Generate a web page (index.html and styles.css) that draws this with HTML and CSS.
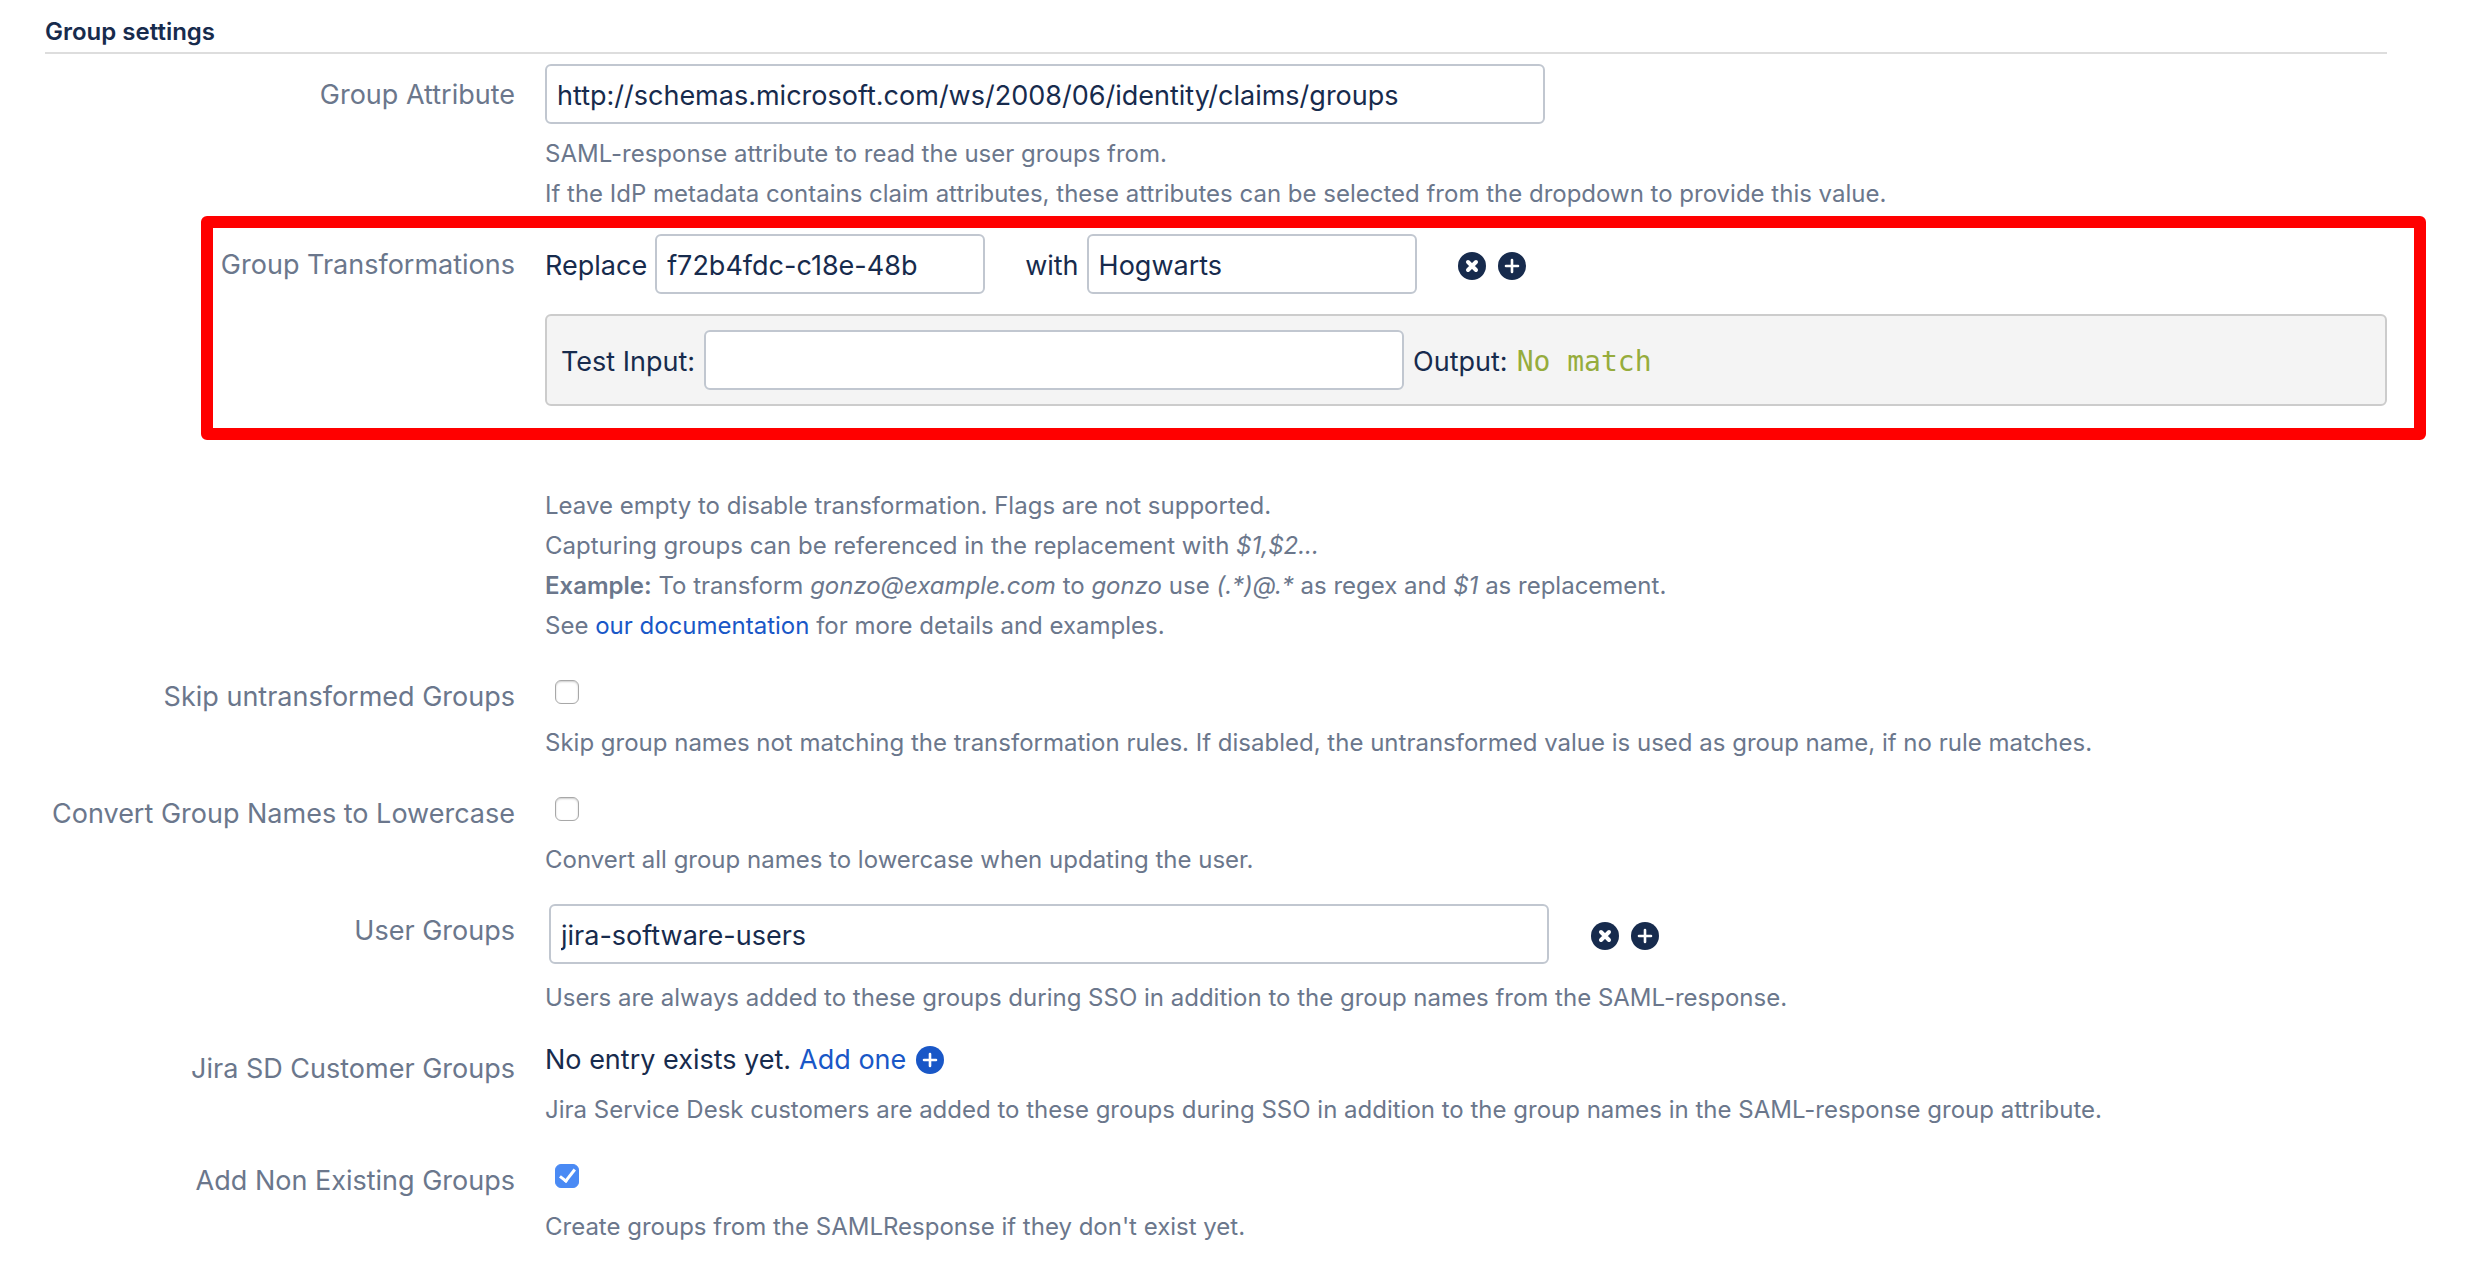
FILE: index.html
```html
<!DOCTYPE html>
<html lang="en">
<head>
  <meta charset="UTF-8" />
  <meta name="viewport" content="width=device-width, initial-scale=1" />
  <title>Group settings</title>
  <link rel="stylesheet" href="styles.css">
</head>
<body>
  <!-- shared icons -->
  <svg class="sprite" aria-hidden="true">
    <symbol id="icon-remove" viewBox="0 0 28 28">
      <circle cx="14" cy="14" r="14" fill="currentColor" />
      <path d="M10 10l8 8M18 10l-8 8" stroke="#fff" stroke-width="4" stroke-linecap="round" />
    </symbol>
    <symbol id="icon-add" viewBox="0 0 28 28">
      <circle cx="14" cy="14" r="14" fill="currentColor" />
      <path d="M14 8v12M8 14h12" stroke="#fff" stroke-width="2.6" stroke-linecap="round" />
    </symbol>
  </svg>

  <form class="settings">
    <h2>Group settings</h2>

    <div class="field">
      <label class="field-label" for="groupAttribute">Group Attribute</label>
      <div class="field-body">
        <input type="text" class="text long" id="groupAttribute" value="http://schemas.microsoft.com/ws/2008/06/identity/claims/groups" />
        <p class="description">
          SAML-response attribute to read the user groups from.<br>
          If the IdP metadata contains claim attributes, these attributes can be selected from the dropdown to provide this value.
        </p>
      </div>
    </div>

    <div class="field highlighted">
      <span class="field-label">Group Transformations</span>
      <div class="field-body">
        <div class="rule">
          <label for="replaceRegex">Replace</label>
          <input type="text" class="text short" id="replaceRegex" value="f72b4fdc-c18e-48b" />
          <label class="with" for="replaceWith">with</label>
          <input type="text" class="text short" id="replaceWith" value="Hogwarts" />
          <div class="actions">
            <button type="button" aria-label="Remove transformation"><svg class="icon"><use href="#icon-remove" /></svg></button>
            <button type="button" aria-label="Add transformation"><svg class="icon"><use href="#icon-add" /></svg></button>
          </div>
        </div>
        <div class="test-box">
          <label for="testInput">Test Input:</label>
          <input type="text" class="text medium" id="testInput" />
          <span>Output:</span>
          <output class="result" for="testInput">No match</output>
        </div>
        <p class="description spaced">
          Leave empty to disable transformation. Flags are not supported.<br>
          Capturing groups can be referenced in the replacement with <em>$1,$2...</em><br>
          <strong>Example:</strong> To transform <em>gonzo@example.com</em> to <em>gonzo</em> use <em>(.*)@.*</em> as regex and <em>$1</em> as replacement.<br>
          See <a href="#documentation">our documentation</a> for more details and examples.
        </p>
      </div>
    </div>

    <div class="field">
      <label class="field-label" for="skipGroups">Skip untransformed Groups</label>
      <div class="field-body">
        <div class="check"><input type="checkbox" id="skipGroups" /></div>
        <p class="description">Skip group names not matching the transformation rules. If disabled, the untransformed value is used as group name, if no rule matches.</p>
      </div>
    </div>

    <div class="field">
      <label class="field-label" for="lowercase">Convert Group Names to Lowercase</label>
      <div class="field-body">
        <div class="check"><input type="checkbox" id="lowercase" /></div>
        <p class="description">Convert all group names to lowercase when updating the user.</p>
      </div>
    </div>

    <div class="field">
      <label class="field-label" for="userGroups">User Groups</label>
      <div class="field-body">
        <div class="entry">
          <input type="text" class="text long" id="userGroups" value="jira-software-users" />
          <div class="actions">
            <button type="button" aria-label="Remove group"><svg class="icon"><use href="#icon-remove" /></svg></button>
            <button type="button" aria-label="Add group"><svg class="icon"><use href="#icon-add" /></svg></button>
          </div>
        </div>
        <p class="description">Users are always added to these groups during SSO in addition to the group names from the SAML-response.</p>
      </div>
    </div>

    <div class="field">
      <span class="field-label">Jira SD Customer Groups</span>
      <div class="field-body">
        <div class="empty">
          <span>No entry exists yet.</span>
          <a href="#add">Add one <svg class="icon" aria-hidden="true"><use href="#icon-add" /></svg></a>
        </div>
        <p class="description">Jira Service Desk customers are added to these groups during SSO in addition to the group names in the SAML-response group attribute.</p>
      </div>
    </div>

    <div class="field">
      <label class="field-label" for="addGroups">Add Non Existing Groups</label>
      <div class="field-body">
        <div class="check"><input type="checkbox" id="addGroups" checked /></div>
        <p class="description">Create groups from the SAMLResponse if they don't exist yet.</p>
      </div>
    </div>
  </form>
</body>
</html>
```
FILE: styles.css
```css
*,
*::before {
  box-sizing: border-box;
}
body {
  margin: 0;
  background: #fff;
  color: #172b4d;
  font-family: Inter, "Liberation Sans", sans-serif;
  font-size: 27px;
  line-height: 40px;
}
.sprite {
  display: none;
}
.settings {
  padding: 12px 98px 24px 45px;
}
h2 {
  margin: 0 0 10px;
  border-bottom: 2px solid #ddd;
  font-size: 24px;
  font-weight: 600;
  line-height: 40px;
}
.field {
  display: grid;
  grid-template-columns: 470px 1fr;
  column-gap: 30px;
  margin-bottom: 20px;
}
.field-label {
  padding-top: 11px;
  color: #6b778c;
  text-align: right;
}
.description {
  margin: 10px 0 0;
  color: #6b778c;
  font-size: 24px;
}
.description.spaced {
  margin-top: 80px;
}
.description strong {
  font-weight: 600;
}
a {
  color: #1957c7;
  text-decoration: none;
}
a:hover {
  text-decoration: underline;
}

/* text fields */
.text {
  display: block;
  height: 60px;
  padding: 3px 10px 0;
  border: 2px solid #c1c7d0;
  border-radius: 6px;
  background: #fff;
  color: #172b4d;
  font: inherit;
}
.text:focus {
  outline: none;
  border-color: #4c9aff;
}
.long {
  width: 1000px;
}
.medium {
  width: 700px;
}
.short {
  width: 330px;
}

/* transformation rule */
.highlighted {
  position: relative;
}
.highlighted::before {
  content: "";
  position: absolute;
  top: -18px;
  left: 156px;
  right: -39px;
  height: 224px;
  border: 12px solid #f00;
  border-radius: 6px;
  pointer-events: none;
}
.rule,
.entry,
.empty,
.test-box {
  display: flex;
  align-items: center;
}
.rule {
  gap: 8px;
}
.rule label,
.test-box label,
.test-box span,
.test-box output,
.actions {
  padding-top: 4px;
}
.with {
  margin-left: 32px;
}
.actions {
  display: flex;
  gap: 12px;
  margin-left: 33px;
}
.entry {
  padding: 4px;
}
.entry .actions {
  margin-left: 42px;
}
button {
  padding: 0;
  border: none;
  background: none;
  color: #172b4d;
  line-height: 0;
  cursor: pointer;
}
.icon {
  display: block;
  width: 28px;
  height: 28px;
}
.test-box {
  gap: 9px;
  margin-top: 20px;
  padding: 14px;
  border: 2px solid #ccc;
  border-radius: 6px;
  background: #f4f4f4;
}
.result {
  color: #96ac3c;
  font-family: "DejaVu Sans Mono", monospace;
  font-size: 28px;
}

/* checkboxes */
.check {
  height: 47px;
  padding: 14px 10px 0;
}
.check input {
  appearance: none;
  display: grid;
  place-content: center;
  width: 24px;
  height: 24px;
  margin: 0;
  border: 1px solid #a8a8a8;
  border-radius: 6px;
  background: #fff;
  box-shadow: inset 0 1px 2px #ccc;
}
.check input:checked {
  border-color: #4a8af4;
  background: #4a8af4;
  box-shadow: none;
}
.check input:checked::before {
  content: "";
  width: 9px;
  height: 16px;
  margin-bottom: 4px;
  border: solid #fff;
  border-width: 0 3px 3px 0;
  transform: rotate(38deg);
}

.empty {
  height: 42px;
  gap: 8px;
  padding-top: 2px;
}
.empty a {
  display: flex;
  align-items: center;
  gap: 10px;
}
```
